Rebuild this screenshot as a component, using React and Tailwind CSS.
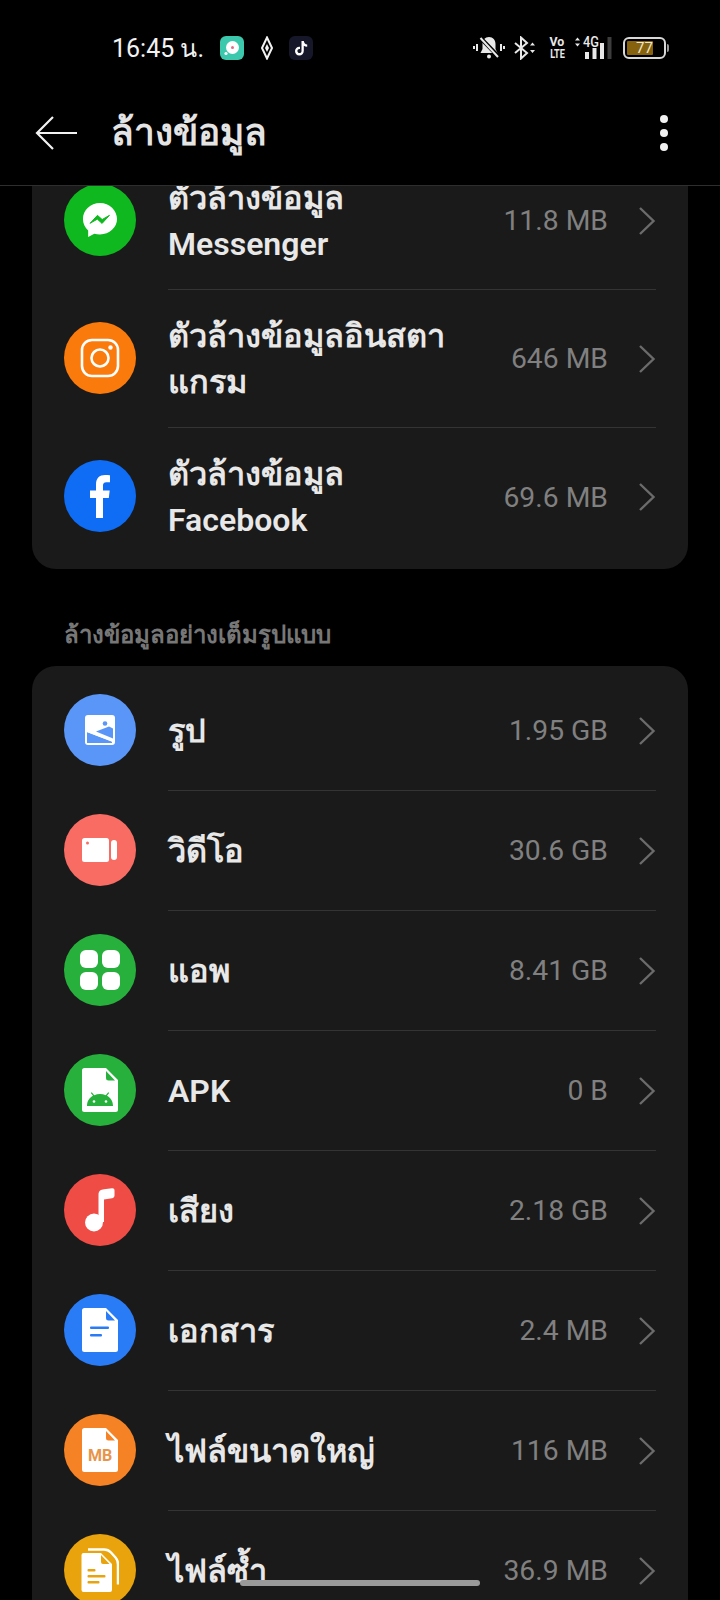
const Chevron = () => (
  <svg width="18" height="30" viewBox="0 0 18 30" fill="none" className="shrink-0">
    <path d="M2 2 L15.5 15 L2 28" stroke="#6b6b6b" strokeWidth="2.4" />
  </svg>
);

const Circle = ({ bg, children }) => (
  <div className={`w-[72px] h-[72px] mb-[2px] rounded-full shrink-0 flex items-center justify-center ${bg}`}>{children}</div>
);

const Messenger = () => (
  <svg width="36" height="36" viewBox="0 0 38 38">
    <path d="M19 1C9 1 1 8.500 1 18c0 4.800 2 9 5.500 12v7l6.500-3.600c1.900.5 3.900.8 6 .8 10 0 18-7.200 18-16.200S29 1 19 1z" fill="#fff" />
    <path d="M8.500 22.500l7.800-8.400 5 4.400 7.700-4.400-7.800 8.500-5-4.500z" fill="#0fb81f" stroke="#0fb81f" strokeWidth="1" />
  </svg>
);
const Instagram = () => (
  <svg width="40" height="40" viewBox="0 0 40 40" fill="none" stroke="#fff">
    <rect x="2" y="2" width="36" height="36" rx="10" strokeWidth="2.600" />
    <circle cx="20" cy="20" r="8.500" strokeWidth="2.600" />
    <circle cx="30.500" cy="9.500" r="2.200" fill="#fff" stroke="none" />
  </svg>
);
const Facebook = () => (
  <svg width="22" height="44" viewBox="0 0 22 44">
    <path d="M7 44V24H1v-7.500h6v-6C7 4 10.500 1 16 1c2.300 0 4 .2 5 .3v6.900h-3.600c-2.700 0-3.400 1.300-3.400 3.200v5.100h6.700L19.800 24H14v20z" fill="#fff" />
  </svg>
);
const ImageIc = () => (
  <svg width="30" height="30" viewBox="0 0 30 30">
    <rect x="0" y="0" width="30" height="30" rx="3" fill="#fff" />
    <circle cx="20" cy="8.500" r="2.300" fill="#5a96f8" />
    <path d="M2 17l25 9.500V28H2z" fill="#5a96f8" />
    <path d="M11 16.500l13-5 4 2v10z" fill="#5a96f8" />
    <path d="M2 16.500l26 10" stroke="#fff" strokeWidth="1.200" />
  </svg>
);
const VideoIc = () => (
  <svg width="36" height="24" viewBox="0 0 36 24">
    <rect x="0" y="0" width="27" height="24" rx="2.500" fill="#fff" />
    <circle cx="5.500" cy="5" r="1.500" fill="#f96c64" />
    <rect x="29" y="2" width="6" height="20" rx="3" fill="#fff" />
  </svg>
);
const AppsIc = () => (
  <div className="grid grid-cols-2 gap-1">
    <div className="w-[18px] h-[18px] rounded-[6px] bg-white"></div>
    <div className="w-[18px] h-[18px] rounded-[6px] bg-white"></div>
    <div className="w-[18px] h-[18px] rounded-[6px] bg-white"></div>
    <div className="w-[18px] h-[18px] rounded-[6px] bg-white"></div>
  </div>
);
const Doc = ({ color, children }) => (
  <svg width="36" height="44" viewBox="0 0 36 44">
    <path d="M2.500 0H24l12 12v29.500a2.500 2.500 0 0 1-2.500 2.500h-31A2.500 2.500 0 0 1 0 41.500v-39A2.500 2.500 0 0 1 2.500 0z" fill="#fff" />
    <path d="M24 3l9 9.500h-6.500A2.500 2.500 0 0 1 24 10z" fill={color} />
    {children}
  </svg>
);
const ApkIc = () => (
  <Doc color="#27b13c">
    <path d="M5 38c0-5 2.500-8.500 6-10.300L8.800 25l1-.8 2.400 3c1.800-.7 3.800-1.100 5.800-1.100s4 .4 5.800 1.100l2.400-3 1 .8L25 27.700c3.500 1.800 6 5.300 6 10.300z" fill="#27b13c" />
    <circle cx="12" cy="33.500" r="1.300" fill="#fff" />
    <circle cx="24" cy="33.500" r="1.300" fill="#fff" />
  </Doc>
);
const MusicIc = () => (
  <svg width="30" height="44" viewBox="0 0 30 44">
    <circle cx="9" cy="34.500" r="9" fill="#fff" />
    <path d="M13.500 34V6.500C13.500 3 16 1.500 19 1.300L27 .3c1.500-.2 2.500.7 2.500 2.200v5c0 1.500-1 2.500-2.500 2.700l-8 1.300V34z" fill="#fff" />
  </svg>
);
const DocIc = () => (
  <Doc color="#2a7cf6">
    <rect x="8" y="18.500" width="19" height="2.500" rx="1" fill="#2a7cf6" />
    <rect x="8" y="26" width="12" height="2.500" rx="1" fill="#2a7cf6" />
  </Doc>
);
const LargeIc = () => (
  <div className="relative w-[36px] h-[44px]">
    <Doc color="#f58224" />
    <span className="absolute left-0 right-0 top-[18px] text-center text-[16px] leading-[20px] font-bold text-[#e8944a]">MB</span>
  </div>
);
const DupIc = () => (
  <svg width="38" height="44" viewBox="0 0 38 44" fill="none">
    <path d="M7 1.500h16c3 0 5 .8 7 3l4.500 5c2 2.200 2.500 4 2.500 7v20" stroke="#fff" strokeWidth="2.500" />
    <path d="M2.500 5H20l11 11v26a2 2 0 0 1-2 2H2.500a2 2 0 0 1-2-2V7a2 2 0 0 1 2-2z" fill="#fff" />
    <path d="M20 7l8.500 9H22a2 2 0 0 1-2-2z" fill="#e8a30d" />
    <rect x="6.500" y="21" width="8" height="2.400" rx="1" fill="#e8a30d" />
    <rect x="6.500" y="27" width="18" height="2.400" rx="1" fill="#e8a30d" />
    <rect x="6.500" y="33" width="12" height="2.400" rx="1" fill="#e8a30d" />
  </svg>
);

const Th = ({ children }) => <span className="text-[32.5px] font-bold">{children}</span>;

const Row = ({ icon, bg, title, value, tall, last }) => (
  <div className={`flex items-center pl-8 ${tall ? "h-[138px]" : "h-[120px]"}`}>
    <Circle bg={bg}>{icon}</Circle>
    <div className={`ml-8 mr-8 flex-1 h-full flex items-center ${last ? "" : "border-b border-[#343434]"}`}>
      <div className="flex-1 text-[32px] leading-[46px] font-semibold text-[#e8e8e8] whitespace-nowrap">{title}</div>
      <div className="pt-[2px] text-[28.3px] text-[#808080] whitespace-nowrap">{value}</div>
      <div className="ml-[30px] flex items-center"><Chevron /></div>
    </div>
  </div>
);

const StatusLeft = () => (
  <div className="flex items-center">
    <span className="text-[25px] text-[#f2f2f2] leading-none">16:45 น.</span>
    <div className="ml-[16px] w-[24px] h-[24px] rounded-[6px] bg-[#3cc8ac] flex items-center justify-center">
      <svg width="16" height="16" viewBox="0 0 16 16">
        <circle cx="8.500" cy="7.500" r="6.500" fill="#fff" />
        <circle cx="8.500" cy="7.500" r="1.500" fill="#e86a8a" />
        <circle cx="2" cy="13.500" r="1.600" fill="#fff" />
      </svg>
    </div>
    <svg width="12" height="24" viewBox="0 0 12 24" className="ml-[17px]" fill="none" stroke="#f2f2f2" strokeWidth="2">
      <path d="M6 1.500L11 12 6 22.500 1 12z" />
      <path d="M6 8l2 4-2 4-2-4z" fill="#f2f2f2" stroke="none" />
    </svg>
    <div className="ml-[16px] w-[24px] h-[24px] rounded-[6px] bg-[#16182a] flex items-center justify-center">
      <svg width="14" height="16" viewBox="0 0 14 16">
        <path d="M7.500 1h2.300c.2 2 1.500 3.300 3.400 3.500v2.300c-1.300 0-2.500-.4-3.400-1.100v5.100c0 2.900-2 4.700-4.500 4.700S1 13.500 1 11s2.200-4.600 5-4.300v2.400c-1.500-.3-2.600.7-2.600 1.900 0 1.200 1 2.100 2.100 2.100 1.200 0 2-.9 2-2.200z" fill="#fff" />
      </svg>
    </div>
  </div>
);

const StatusRight = () => (
  <div className="flex items-center">
    <svg width="32" height="24" viewBox="0 0 32 24" fill="none">
      <path d="M16 1c-4 0-6.500 3-6.500 7v5L7.500 17h17L22.500 13V8C22.500 4 20 1 16 1z" fill="#e8e8e8" />
      <circle cx="16" cy="20.500" r="2" fill="#e8e8e8" />
      <path d="M8 2.500L25 20" stroke="#000" strokeWidth="4" />
      <path d="M7.500 2L25 21" stroke="#e8e8e8" strokeWidth="2" />
      <path d="M4 8v7M1 10v3M28 8v7M31 10v3" stroke="#e8e8e8" strokeWidth="2" />
    </svg>
    <svg width="22" height="24" viewBox="0 0 22 24" fill="none" className="ml-[9px]">
      <path d="M1 7l12 10-6 5.500V1.500l6 5.500L1 17" stroke="#e8e8e8" strokeWidth="2" />
      <path d="M16 9.500l2.500-3 2.500 3zM16 14l2.500 3 2.500-3z" fill="#e8e8e8" />
    </svg>
    <div className="ml-[13px] w-[16px] flex flex-col items-center font-bold text-[#e8e8e8] text-[13px] leading-[12px]">
      <span className="scale-x-[0.95]">Vo</span>
      <span className="text-[13px] scale-x-[0.7] whitespace-nowrap">LTE</span>
    </div>
    <div className="relative ml-[9px] w-[40px] h-[24px]">
      <svg width="40" height="24" viewBox="0 0 40 24" className="absolute left-0 top-0">
        <path d="M1 4.500l2.500-3 2.500 3zM1 7.500l2.500 3 2.500-3z" fill="#e8e8e8" />
        <rect x="11" y="16" width="4" height="7" fill="#e8e8e8" />
        <rect x="18.500" y="12" width="4" height="11" fill="#e8e8e8" />
        <rect x="26" y="7" width="4" height="16" fill="#e8e8e8" />
        <rect x="33.500" y="1" width="4" height="22" fill="#3d3d3d" />
      </svg>
      <span className="absolute left-[9px] top-[0px] text-[15px] leading-[13px] font-medium text-[#e8e8e8] scale-x-[0.85] origin-left">4G</span>
    </div>
    <div className="ml-[9px] relative w-[43px] h-[22px] rounded-[6px] border-2 border-[#d8d8d8] p-[2px]">
      <div className="h-full w-[73%] bg-[#86620f] rounded-[1px]"></div>
      <span className="absolute inset-0 flex items-center justify-center text-[15px] text-[#f0e6c8]">77</span>
    </div>
    <div className="ml-[1px] w-[2px] h-[8px] bg-[#9a9a9a] rounded-r"></div>
  </div>
);

export default function App() {
  return (
    <div className="relative w-[720px] h-[1600px] bg-black overflow-hidden flex flex-col font-['Roboto','Noto_Sans',sans-serif]">
      <div className="h-[96px] shrink-0 flex items-center justify-between pl-[112px] pr-[51px]">
        <StatusLeft />
        <StatusRight />
      </div>
      <div className="h-[90px] shrink-0 flex items-center border-b border-[#2e2e2e] pb-[15px]">
        <svg width="44" height="36" viewBox="0 0 44 36" fill="none" className="ml-[35px]">
          <path d="M42 18H2M18 2L2 18l16 16" stroke="#f2f2f2" strokeWidth="2.200" />
        </svg>
        <div className="ml-[32px] flex-1 text-[37px] leading-[44px] font-bold text-[#e4e4e4]">ล้างข้อมูล</div>
        <div className="mr-[52px] flex flex-col gap-[6px]">
          <div className="w-[8px] h-[8px] rounded-full bg-[#f2f2f2]"></div>
          <div className="w-[8px] h-[8px] rounded-full bg-[#f2f2f2]"></div>
          <div className="w-[8px] h-[8px] rounded-full bg-[#f2f2f2]"></div>
        </div>
      </div>
      <div className="flex-1 overflow-hidden">
        <div className="-mt-[34px]">
          <div className="w-[656px] ml-8 rounded-[24px] bg-[#1a1a1a] pb-[3px]">
            <Row tall bg="bg-[#0fb81f]" icon={<Messenger />} title={<><Th>ตัวล้างข้อมูล</Th><br />Messenger</>} value="11.8 MB" />
            <Row tall bg="bg-[#fb7a0c]" icon={<Instagram />} title={<><Th>ตัวล้างข้อมูลอินสตา</Th><br /><Th>แกรม</Th></>} value="646 MB" />
            <Row tall last bg="bg-[#0f6cf5]" icon={<Facebook />} title={<><Th>ตัวล้างข้อมูล</Th><br />Facebook</>} value="69.6 MB" />
          </div>
          <div className="h-[97px] pl-16 pt-[50px] text-[24px] leading-[32px] font-semibold text-[#777777]">ล้างข้อมูลอย่างเต็มรูปแบบ</div>
          <div className="ml-8 w-[656px] rounded-t-[24px] bg-[#1a1a1a] pt-[5px]">
            <Row bg="bg-[#5a96f8]" icon={<ImageIc />} title={<Th>รูป</Th>} value="1.95 GB" />
            <Row bg="bg-[#f96c64]" icon={<VideoIc />} title={<Th>วิดีโอ</Th>} value="30.6 GB" />
            <Row bg="bg-[#27b13c]" icon={<AppsIc />} title={<Th>แอพ</Th>} value="8.41 GB" />
            <Row bg="bg-[#27b13c]" icon={<ApkIc />} title="APK" value="0 B" />
            <Row bg="bg-[#ef4c46]" icon={<MusicIc />} title={<Th>เสียง</Th>} value="2.18 GB" />
            <Row bg="bg-[#2a7cf6]" icon={<DocIc />} title={<Th>เอกสาร</Th>} value="2.4 MB" />
            <Row bg="bg-[#f58224]" icon={<LargeIc />} title={<Th>ไฟล์ขนาดใหญ่</Th>} value="116 MB" />
            <Row bg="bg-[#e8a30d]" icon={<DupIc />} title={<Th>ไฟล์ซ้ำ</Th>} value="36.9 MB" />
          </div>
        </div>
      </div>
      <div className="absolute left-[240px] top-[1580px] w-[240px] h-[6px] rounded-full bg-[#9a9a9a]"></div>
    </div>
  );
}
